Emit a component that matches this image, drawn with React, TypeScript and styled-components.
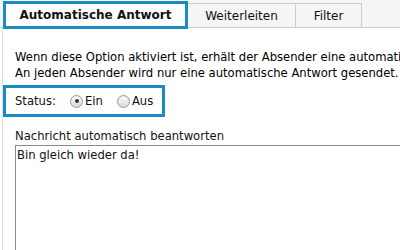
import styled, { createGlobalStyle } from "styled-components";

const Global = createGlobalStyle`
  html, body {
    margin: 0;
    padding: 0;
    background: #ffffff;
    overflow: hidden;
  }
  body {
    font-family: "DejaVu Sans", Verdana, sans-serif;
    font-size: 11.6px;
    color: #111;
  }
`;

export default function App() {
  return (
    <Page>
      <Global />
      <TabBar>
        <Tab active>Automatische Antwort</Tab>
        <Tab>Weiterleiten</Tab>
        <Tab>Filter</Tab>
      </TabBar>
      <Panel>
        <Intro>
          Wenn diese Option aktiviert ist, erhält der Absender eine automatische Antwort.
          <br />
          An jeden Absender wird nur eine automatische Antwort gesendet.
        </Intro>
        <StatusBox>
          <StatusLabel>Status:</StatusLabel>
          <Choice>
            <Radio checked />
            Ein
          </Choice>
          <Choice>
            <Radio />
            Aus
          </Choice>
        </StatusBox>
        <FieldLabel>Nachricht automatisch beantworten</FieldLabel>
        <MessageBox defaultValue="Bin gleich wieder da!" />
      </Panel>
    </Page>
  );
}

const Page = styled.div`
  width: 400px;
  height: 250px;
  overflow: hidden;
  display: flex;
  flex-direction: column;
`;

const TabBar = styled.nav`
  height: 28px;
  flex-shrink: 0;
  display: flex;
  align-items: flex-end;
  padding-left: 3px;
  background: #f5f5f5;
  border-bottom: 1px solid #cccccc;
  box-sizing: border-box;
`;

const Tab = styled.div<{ active?: boolean }>`
  box-sizing: border-box;
  display: flex;
  align-items: center;
  justify-content: center;
  font-size: 12px;
  white-space: nowrap;
  ${({ active }) =>
    active
      ? `
    width: 185px;
    height: 28px;
    margin-bottom: -2px;
    border: 3px solid #1b8cc3;
    background: #ffffff;
    font-weight: bold;
    position: relative;
    z-index: 1;
  `
      : `
    height: 24px;
    border: 1px solid #cccccc;
    border-left: none;
    border-bottom: none;
    background: #f5f5f5;
  `}
  &:nth-child(2) {
    width: 108px;
  }
  &:nth-child(3) {
    width: 66px;
  }
`;

const Panel = styled.main`
  flex: 1;
  margin-left: 2px;
  border-left: 1px solid #dddddd;
  display: flex;
  flex-direction: column;
`;

const Intro = styled.p`
  margin: 21px 0 0 12px;
  line-height: 16px;
  white-space: nowrap;
  color: #000;
`;

const StatusBox = styled.div`
  align-self: flex-start;
  margin-top: 4px;
  box-sizing: border-box;
  width: 162px;
  height: 32px;
  border: 3px solid #1b8cc3;
  display: flex;
  align-items: center;
  padding-left: 9px;
`;

const StatusLabel = styled.span`
  flex-shrink: 0;
  width: 55px;
`;

const Choice = styled.label`
  flex-shrink: 0;
  display: flex;
  align-items: center;
  gap: 2px;
  margin-right: 14px;
  &:last-child {
    margin-right: 0;
  }
`;

const Radio = styled.span<{ checked?: boolean }>`
  position: relative;
  width: 13px;
  height: 13px;
  box-sizing: border-box;
  border-radius: 50%;
  border: 1px solid #9a9a9a;
  background: linear-gradient(#ffffff, #d8d8d8);
  box-shadow: inset 0 1px 1px rgba(0, 0, 0, 0.08);
  &::after {
    content: "";
    display: ${({ checked }) => (checked ? "block" : "none")};
    position: absolute;
    left: 3.5px;
    top: 3.5px;
    width: 4px;
    height: 4px;
    border-radius: 50%;
    background: #333;
  }
`;

const FieldLabel = styled.div`
  margin: 12px 0 0 12px;
  line-height: 14px;
`;

const MessageBox = styled.textarea`
  margin: 2px 0 0 12px;
  flex: 1;
  width: 420px;
  box-sizing: border-box;
  border: 1px solid #8a8a8a;
  border-right: none;
  border-bottom: none;
  padding: 2px 1px;
  font-family: "DejaVu Sans", Verdana, sans-serif;
  font-size: 11.6px;
  color: #111;
  resize: none;
  outline: none;
`;
